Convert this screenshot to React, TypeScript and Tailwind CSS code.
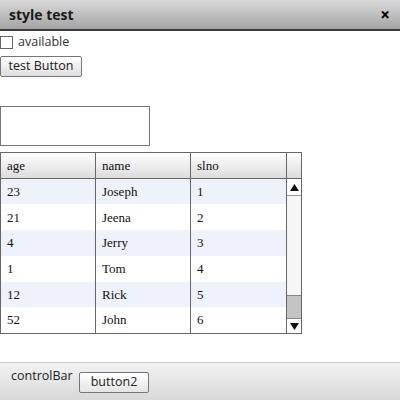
import React from "react";

type Row = { age: string; name: string; slno: string };

const rows: Row[] = [
  { age: "23", name: "Joseph", slno: "1" },
  { age: "21", name: "Jeena", slno: "2" },
  { age: "4", name: "Jerry", slno: "3" },
  { age: "1", name: "Tom", slno: "4" },
  { age: "12", name: "Rick", slno: "5" },
  { age: "52", name: "John", slno: "6" },
];

const sans = "font-['Open_Sans',sans-serif]";
const serif = "font-['Liberation_Serif',serif]";

const ScrollBar = () => (
  <div className="flex flex-col w-[15px] border-l border-[#666] bg-[#f4f4f4]">
    {/* up arrow */}
    <div className="flex justify-center items-center h-[17px] border-b border-[#999] bg-white">
      <svg width="9" height="7" viewBox="0 0 9 7">
        <path d="M4.5 0 L9 7 L0 7 Z" fill="#111" />
      </svg>
    </div>
    <div className="flex-1 bg-[#f6f6f6]" />
    <div className="h-[24px] bg-[#c4c4c4] border-y border-[#888]" />
    <div className="flex justify-center items-center h-[14px] bg-white">
      <svg width="9" height="7" viewBox="0 0 9 7">
        <path d="M0 0 L9 0 L4.5 7 Z" fill="#111" />
      </svg>
    </div>
  </div>
);

const App = () => {
  return (
    <div className={`flex flex-col w-[400px] h-[400px] bg-white ${sans}`}>
      {/* Title bar */}
      <div className="flex flex-row justify-between items-center h-[31px] px-[9px] bg-gradient-to-b from-[#dadada] to-[#a4a4a4] border-b-2 border-[#3c3c3c]">
        <p className="font-bold text-[14px] text-[#1a1a1a]">style test</p>
        <span className="mr-[1px] font-bold text-[17px] leading-none text-black">×</span>
      </div>

      {/* Checkbox */}
      <div className="flex flex-row items-center gap-[5px] mt-[3px] h-[17px]">
        <div className="w-[13px] h-[13px] border border-[#666] bg-white" />
        <span className="text-[12.5px] text-[#333]">available</span>
      </div>

      {/* Button */}
      <div className="flex mt-[5px]">
        <button className="h-[21px] w-[82px] rounded-[2px] border border-[#777] bg-gradient-to-b from-white to-[#dedede] text-[12.5px] text-[#222] leading-none">
          test Button
        </button>
      </div>

      {/* Text box */}
      <div className="mt-[29px] w-[150px] h-[40px] border border-[#777] bg-white" />

      {/* Table */}
      <div className={`flex flex-row mt-[6px] w-[302px] h-[182px] border border-[#666] ${serif}`}>
        <div className="flex flex-col flex-1">
          <div className="grid grid-cols-[95px_95px_95px] h-[26px] bg-gradient-to-b from-white to-[#dcdcdc] border-b border-[#666] text-[13px] text-[#111]">
            <div className="flex items-center pl-[6px] border-r border-[#666]">age</div>
            <div className="flex items-center pl-[6px] border-r border-[#666]">name</div>
            <div className="flex items-center pl-[6px]">slno</div>
          </div>
          {rows.map((row, i) => (
            <div
              key={row.slno}
              className={
                "grid grid-cols-[95px_95px_95px] h-[26px] text-[13px] text-[#111] " +
                (i % 2 === 0 ? "bg-[#eef2fa]" : "bg-white")
              }
            >
              <div className="flex items-center pl-[6px] border-r border-[#666]">{row.age}</div>
              <div className="flex items-center pl-[6px] border-r border-[#666]">{row.name}</div>
              <div className="flex items-center pl-[6px]">{row.slno}</div>
            </div>
          ))}
        </div>
        <div className="flex flex-col w-[15px]">
          <div className="h-[26px] border-l border-b border-[#666] bg-gradient-to-b from-white to-[#dcdcdc]" />
          <div className="flex flex-1">
            <ScrollBar />
          </div>
        </div>
      </div>

      {/* Control bar */}
      <div className="flex flex-row items-start mt-auto h-[38px] pl-[11px] pt-[4px] border-t border-[#c8c8c8] bg-gradient-to-b from-[#f2f2f2] to-[#d8d8d8]">
        <span className="w-[68px] text-[12.5px] text-[#222]">controlBar</span>
        <button className="mt-[5px] h-[21px] w-[70px] rounded-[2px] border border-[#777] bg-gradient-to-b from-white to-[#e4e4e4] text-[12.5px] text-[#222] leading-none">
          button2
        </button>
      </div>
    </div>
  );
};

export default App;
